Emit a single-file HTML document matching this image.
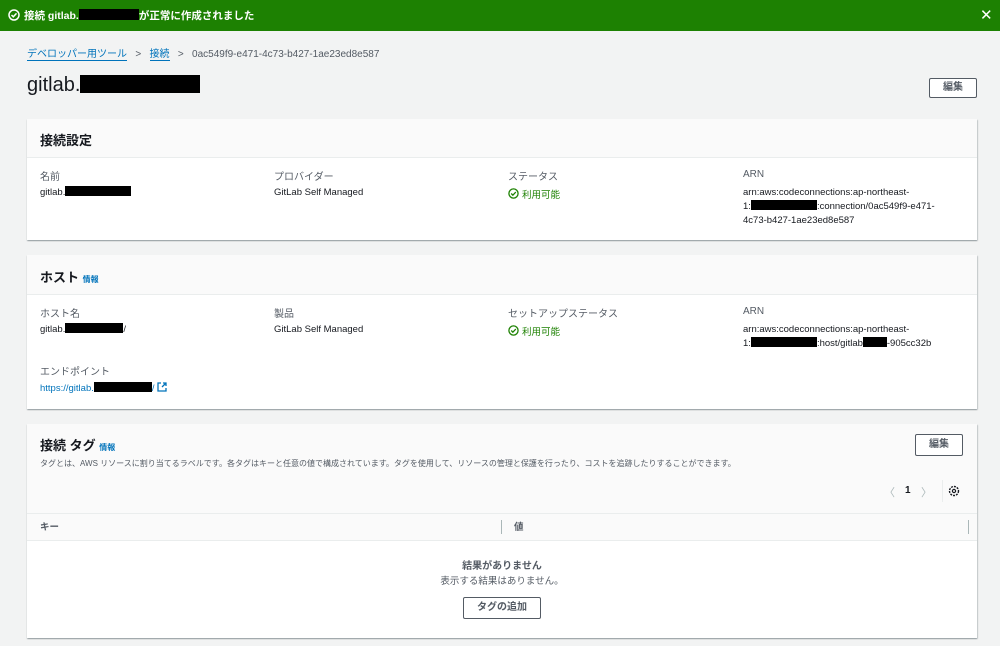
<!DOCTYPE html>
<html><head><meta charset="utf-8"><style>
*{margin:0;padding:0;box-sizing:border-box}
body{width:1000px;height:646px;overflow:hidden;background:#f2f3f3;font-family:"Liberation Sans","Noto Sans CJK JP",sans-serif;color:#16191f;position:relative;font-size:10px}
.a{position:absolute;white-space:nowrap}
.banner{position:absolute;left:0;top:0;width:1000px;height:31px;background:#1d8102;color:#fff;font-size:10px;font-weight:bold}
.card{position:absolute;left:27px;width:950px;background:#fff;box-shadow:0 1px 1px rgba(0,28,36,.3),1px 1px 1px rgba(0,28,36,.15)}
.hd{background:#fafafa;border-bottom:1px solid #eaeded;position:relative}
.lbl{color:#545b64;font-size:10px}
.val{font-size:9.5px;color:#16191f}
.blk{display:inline-block;background:#000;vertical-align:middle}
.green{color:#1d8102}
.link{color:#0073bb}
.btn{position:absolute;border:1px solid #545b64;background:#fff;font-size:10px;font-weight:bold;color:#545b64;text-align:center;border-radius:2px}
h2{font-size:13px;font-weight:bold}
</style></head><body>
<div class="banner">
<svg class="a" style="left:8px;top:9px" width="12" height="12" viewBox="0 0 12 12"><circle cx="6" cy="6" r="5" fill="none" stroke="#fff" stroke-width="1.5"/><path d="M3.5 6l1.8 1.8L8.5 4.4" fill="none" stroke="#fff" stroke-width="1.5"/></svg>
<span class="a" style="left:24px;top:8px;font-size:10.5px">接続 gitlab.<span class="blk" style="width:60px;height:11px;margin-top:-3px"></span>が正常に作成されました</span>
<span class="a" style="left:980px;top:6px;font-size:15px;font-weight:normal">✕</span>
</div>
<div class="a" style="left:27px;top:45px;font-size:10px;color:#545b64"><span class="link" style="border-bottom:1px solid #0073bb">デベロッパー用ツール</span>&nbsp;&nbsp;&nbsp;&gt;&nbsp;&nbsp;&nbsp;<span class="link" style="border-bottom:1px solid #0073bb">接続</span>&nbsp;&nbsp;&nbsp;&gt;&nbsp;&nbsp;&nbsp;0ac549f9-e471-4c73-b427-1ae23ed8e587</div>
<div class="a" style="left:27px;top:74px;font-size:20px">gitlab.<span class="blk" style="width:120px;height:18px;margin-top:-4px"></span></div>
<div class="btn" style="left:929px;top:78px;width:48px;height:20px;line-height:18px">編集</div>

<div class="card" style="top:119px;height:121px">
<div class="hd" style="height:39px"><h2 class="a" style="left:13px;top:11px">接続設定</h2></div>
<div class="a lbl" style="left:13px;top:49px">名前</div>
<div class="a val" style="left:13px;top:68px">gitlab.<span class="blk" style="width:66px;height:10px;margin-top:-2px"></span></div>
<div class="a lbl" style="left:247px;top:49px">プロバイダー</div>
<div class="a val" style="left:247px;top:68px">GitLab Self Managed</div>
<div class="a lbl" style="left:481px;top:49px">ステータス</div>
<svg class="a" style="left:481px;top:69px" width="11" height="11" viewBox="0 0 12 12"><circle cx="6" cy="6" r="5" fill="none" stroke="#1d8102" stroke-width="1.4"/><path d="M3.5 6l1.8 1.8L8.5 4.4" fill="none" stroke="#1d8102" stroke-width="1.4"/></svg>
<div class="a val green" style="left:495px;top:68px">利用可能</div>
<div class="a lbl" style="left:716px;top:50px">ARN</div>
<div class="a val" style="left:716px;top:67px;line-height:14px">arn:aws:codeconnections:ap-northeast-<br>1:<span class="blk" style="width:66px;height:10px;margin-top:-2px"></span>:connection/0ac549f9-e471-<br>4c73-b427-1ae23ed8e587</div>
</div>

<div class="card" style="top:255px;height:154px">
<div class="hd" style="height:40px"><h2 class="a" style="left:13px;top:12px">ホスト <span class="link" style="font-size:8px">情報</span></h2></div>
<div class="a lbl" style="left:13px;top:50px">ホスト名</div>
<div class="a val" style="left:13px;top:69px">gitlab.<span class="blk" style="width:58px;height:10px;margin-top:-2px"></span>/</div>
<div class="a lbl" style="left:247px;top:50px">製品</div>
<div class="a val" style="left:247px;top:69px">GitLab Self Managed</div>
<div class="a lbl" style="left:481px;top:50px">セットアップステータス</div>
<svg class="a" style="left:481px;top:70px" width="11" height="11" viewBox="0 0 12 12"><circle cx="6" cy="6" r="5" fill="none" stroke="#1d8102" stroke-width="1.4"/><path d="M3.5 6l1.8 1.8L8.5 4.4" fill="none" stroke="#1d8102" stroke-width="1.4"/></svg>
<div class="a val green" style="left:495px;top:69px">利用可能</div>
<div class="a lbl" style="left:716px;top:51px">ARN</div>
<div class="a val" style="left:716px;top:68px;line-height:14px">arn:aws:codeconnections:ap-northeast-<br>1:<span class="blk" style="width:66px;height:10px;margin-top:-2px"></span>:host/gitlab<span class="blk" style="width:24px;height:10px;margin-top:-2px"></span>-905cc32b</div>
<div class="a lbl" style="left:13px;top:108px">エンドポイント</div>
<div class="a val link" style="left:13px;top:127px">https://gitlab.<span class="blk" style="width:58px;height:10px;margin-top:-2px"></span>/ <svg width="10" height="10" viewBox="0 0 10 10" style="vertical-align:-1px"><path d="M4 1H1v8h8V6M6 1h3v3M9 1L5 5" fill="none" stroke="#0073bb" stroke-width="1.3"/></svg></div>
</div>

<div class="card" style="top:424px;height:214px">
<div class="hd" style="height:90px;border-bottom:1px solid #eaeded">
<h2 class="a" style="left:13px;top:11px">接続 タグ <span class="link" style="font-size:8px">情報</span></h2>
<div class="a" style="left:13px;top:34px;font-size:8px;color:#545b64">タグとは、AWS リソースに割り当てるラベルです。各タグはキーと任意の値で構成されています。タグを使用して、リソースの管理と保護を行ったり、コストを追跡したりすることができます。</div>
<div class="btn" style="left:888px;top:10px;width:48px;height:22px;line-height:20px">編集</div>
<div class="a" style="left:857px;top:60px;font-size:11px;color:#aab7b8">〈</div>
<div class="a" style="left:878px;top:61px;font-size:10px;font-weight:bold">1</div>
<div class="a" style="left:894px;top:60px;font-size:11px;color:#aab7b8">〉</div>
<div class="a" style="left:915px;top:56px;width:1px;height:22px;background:#eaeded"></div>
<svg class="a" style="left:921px;top:61px" width="12" height="12" viewBox="0 0 12 12"><circle cx="6" cy="6" r="4.5" fill="none" stroke="#16191f" stroke-width="1.4" stroke-dasharray="2 1"/><circle cx="6" cy="6" r="1.6" fill="none" stroke="#16191f" stroke-width="1.2"/></svg>
</div>
<div style="position:relative;height:27px;background:#fafafa;border-bottom:1px solid #eaeded">
<div class="a" style="left:13px;top:5px;font-size:9.5px;font-weight:bold;color:#545b64">キー</div>
<div class="a" style="left:474px;top:6px;width:1px;height:14px;background:#aab7b8"></div>
<div class="a" style="left:487px;top:5px;font-size:9.5px;font-weight:bold;color:#545b64">値</div>
<div class="a" style="left:941px;top:6px;width:1px;height:14px;background:#aab7b8"></div>
</div>
<div class="a" style="left:0;width:950px;top:133px;text-align:center;font-size:10px;font-weight:bold;color:#545b64">結果がありません</div>
<div class="a" style="left:0;width:950px;top:149px;text-align:center;font-size:9.5px;color:#545b64">表示する結果はありません。</div>
<div class="btn" style="left:436px;top:173px;width:78px;height:22px;line-height:20px">タグの追加</div>
</div>
</body></html>
